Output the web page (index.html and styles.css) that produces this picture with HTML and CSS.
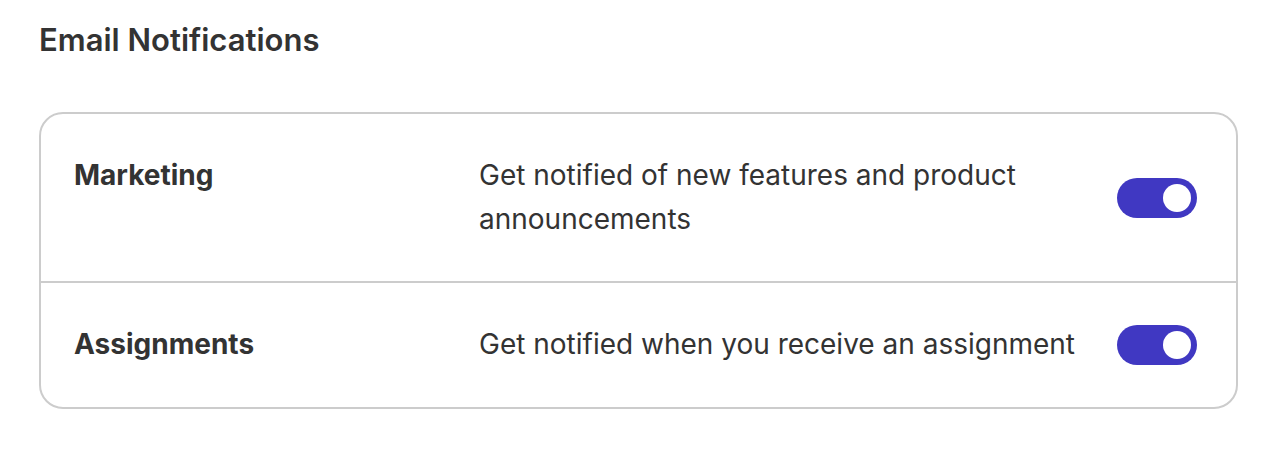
FILE: index.html
```html
<!DOCTYPE html>
<html lang="en">
<head>
<meta charset="utf-8">
<title>Email Notifications</title>
<link rel="stylesheet" href="styles.css">
</head>
<body>
<main class="page">
  <h2 class="title">Email Notifications</h2>
  <section class="card">
    <div class="row">
      <div class="label">Marketing</div>
      <div class="desc">Get notified of new features and product announcements</div>
      <button class="toggle on" aria-pressed="true" aria-label="Marketing"><span class="knob"></span></button>
    </div>
    <div class="row">
      <div class="label">Assignments</div>
      <div class="desc">Get notified when you receive an assignment</div>
      <button class="toggle on" aria-pressed="true" aria-label="Assignments"><span class="knob"></span></button>
    </div>
  </section>
</main>
</body>
</html>
```

FILE: styles.css
```css
* { box-sizing: border-box; }
html, body { margin: 0; background: #fff; }
body {
  font-family: Inter, "Noto Sans", "Liberation Sans", sans-serif;
  color: #333;
}
.page {
  padding: 20px 44px 0 39px;
}
.title {
  margin: 0;
  font-size: 31px;
  line-height: 40px;
  font-weight: 600;
  color: #333;
}
.card {
  margin-top: 52px;
  border: 2px solid #cccccc;
  border-radius: 24px;
}
.row {
  display: grid;
  grid-template-columns: 405px 1fr 80px;
  column-gap: 40px;
  align-items: start;
  padding: 40px 39px 40px 33px;
}
.row + .row { border-top: 2px solid #cccccc; }
.label {
  font-size: 28px;
  line-height: 43.5px;
  font-weight: 700;
  color: #333;
}
.desc {
  font-size: 28px;
  line-height: 43.5px;
  font-weight: 400;
  color: #333;
  margin-left: -40px;
}
.toggle {
  align-self: center;
  width: 80px;
  height: 40px;
  border: 0;
  padding: 0 6px;
  border-radius: 20px;
  background: #4038c2;
  display: flex;
  align-items: center;
  justify-content: flex-end;
  cursor: pointer;
}
.knob {
  width: 28px;
  height: 28px;
  border-radius: 50%;
  background: #fff;
}
```
